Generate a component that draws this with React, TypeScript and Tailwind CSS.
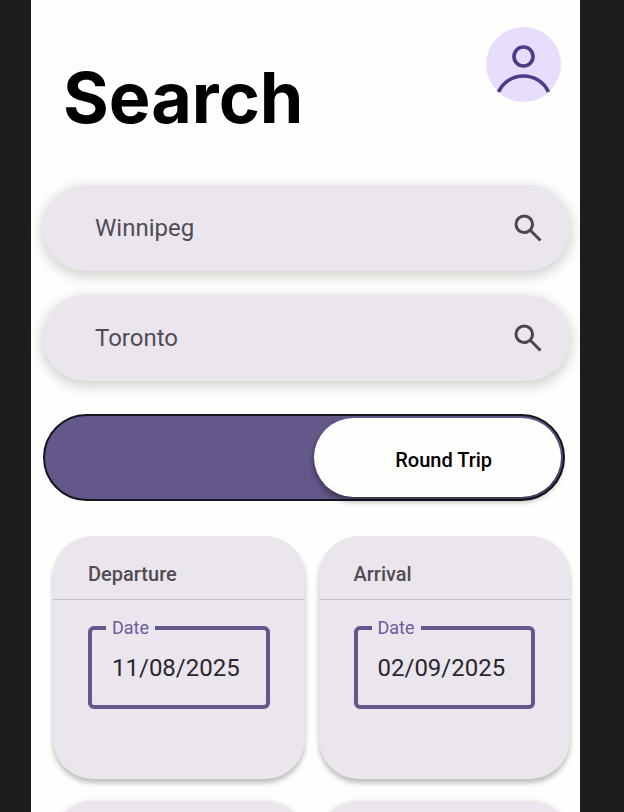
function SearchIcon() {
  return (
    <svg viewBox="0 -960 960 960" className="size-9" fill="currentColor" aria-hidden="true">
      <path d="M784-120 532-372q-30 24-69 38t-83 14q-109 0-184.5-75.5T120-580q0-109 75.5-184.5T380-840q109 0 184.5 75.5T640-580q0 44-14 83t-38 69l252 252-56 56ZM380-400q75 0 127.5-52.5T560-580q0-75-52.5-127.5T380-760q-75 0-127.5 52.5T200-580q0 75 52.5 127.5T380-400Z" />
    </svg>
  );
}

function Avatar() {
  return (
    <button type="button" aria-label="Profile" className="size-[75px] shrink-0 rounded-full bg-[#e8ddfc]">
      <svg viewBox="0 0 75 75" className="size-full" fill="none" stroke="#4d3b88" strokeWidth="3.6">
        <circle cx="37.5" cy="29.5" r="9.5" />
        <path d="M12.5 65 A27.5 27.5 0 0 1 62.5 65" />
      </svg>
    </button>
  );
}

function SearchBar({ label, city }: { label: string; city: string }) {
  return (
    <div className="flex h-[86px] items-center rounded-full bg-[#ebe6ed] pr-6 pl-[52px] shadow-[0_4px_12px_2px_rgba(60,70,50,0.22)]">
      <input
        type="text"
        aria-label={label}
        defaultValue={city}
        className="h-10 min-w-0 flex-1 bg-transparent text-2xl leading-10 text-[#504c55] outline-none"
      />
      <button type="button" aria-label={`Search ${label}`} className="text-[#4b474f]">
        <SearchIcon />
      </button>
    </div>
  );
}

function TripToggle() {
  return (
    <button
      type="button"
      role="switch"
      aria-checked="true"
      className="mr-[5px] flex h-[87px] justify-end rounded-full border-2 border-[#17141f] bg-[#64578a] p-0.5 text-xl font-medium text-black"
    >
      <span className="flex h-full w-[48%] items-center justify-center rounded-full bg-[#fefefd] pt-1 pl-3 shadow-[0_4px_6px_rgba(0,0,0,0.4)]">
        Round Trip
      </span>
    </button>
  );
}

function DateCard({ id, title, date }: { id: string; title: string; date: string }) {
  return (
    <section className="h-[243px] min-w-0 flex-1 rounded-[40px] bg-[#ebe6ed] shadow-[0_4px_5px_rgba(50,55,50,0.32)]">
      <h2 className="flex h-16 items-center border-b border-[#c6c0ca] px-[35px] pt-3 text-xl font-medium text-[#504c55]">
        {title}
      </h2>
      <fieldset className="mx-[35px] mt-4 h-[93px] rounded-md border-4 border-[#64578a] pl-5">
        <legend className="-ml-1.5 px-1.5 text-lg leading-6 text-[#6c5d9b]">
          <label htmlFor={id}>Date</label>
        </legend>
        <input
          id={id}
          type="text"
          defaultValue={date}
          className="mt-2 block h-10 w-full bg-transparent text-2xl leading-10 text-[#29262d] outline-none"
        />
      </fieldset>
    </section>
  );
}

export default function App() {
  return (
    <div className="h-screen overflow-hidden bg-[#1d1d1d] pr-11 pl-[31px] font-[Roboto,sans-serif]">
      <main className="min-h-full bg-[#fefefd] pt-[27px] pr-2.5 pl-3">
        <header className="flex h-[158px] items-start justify-between pr-[9px] pl-5">
          <h1 className="pt-[27px] font-[Inter,sans-serif] text-[70px] leading-[88px] font-bold text-black">Search</h1>
          <Avatar />
        </header>
        <form className="flex flex-col" onSubmit={(e) => e.preventDefault()}>
          <div className="flex flex-col gap-6">
            <SearchBar label="Origin" city="Winnipeg" />
            <SearchBar label="Destination" city="Toronto" />
          </div>
          <div className="mt-[33px] flex flex-col">
            <TripToggle />
          </div>
          <div className="mt-[35px] flex gap-3.5 pl-2.5">
            <DateCard id="departure" title="Departure" date="11/08/2025" />
            <DateCard id="arrival" title="Arrival" date="02/09/2025" />
          </div>
          <div className="mt-[22px] flex gap-3.5 pl-2.5">
            <div className="h-[243px] flex-1 rounded-[40px] bg-[#ebe6ed] shadow-[0_2px_6px_rgba(50,55,50,0.3)]" />
            <div className="h-[243px] flex-1 rounded-[40px] bg-[#ebe6ed] shadow-[0_2px_6px_rgba(50,55,50,0.3)]" />
          </div>
        </form>
      </main>
    </div>
  );
}
